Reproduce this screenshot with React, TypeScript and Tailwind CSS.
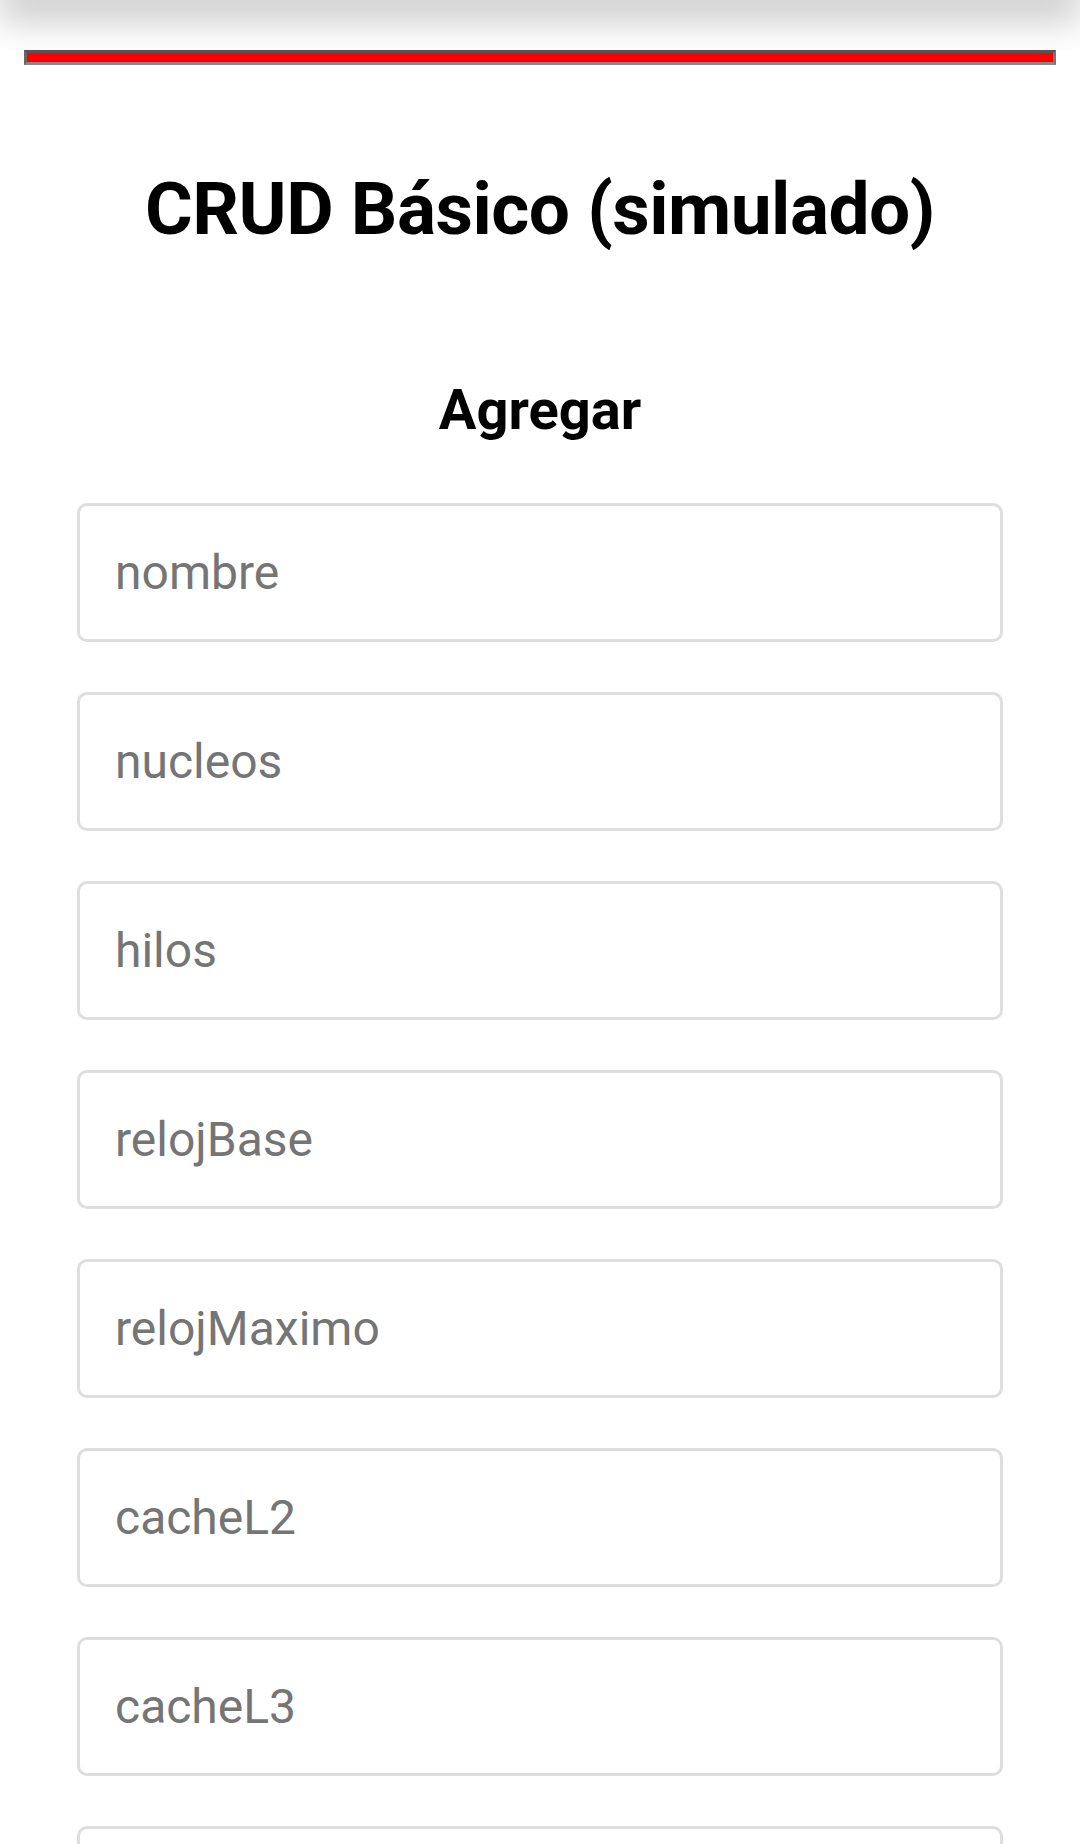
import { useState } from "react";

const FIELDS = ["nombre", "nucleos", "hilos", "relojBase", "relojMaximo", "cacheL2", "cacheL3", "tdp"];

export default function App() {
  const [values, setValues] = useState<Record<string, string>>({});

  return (
    <div className="min-h-[1844px] bg-white font-['Roboto','Liberation_Sans',sans-serif] text-black">
      {/* top shadow strip */}
      <div className="relative h-[50px] overflow-hidden">
        <div className="mx-[20px] h-0 shadow-[0_0_36px_22px_rgba(0,0,0,0.2)]" />
      </div>

      <div className="px-[24px]">
        <div className="h-[15px] border-[3px] border-t-[#5a5252] border-b-[#8c8686] border-l-[#6a6464] border-r-[#7a7474] bg-[#ff0000]" />

        <h1 className="mt-[104px] text-center text-[73px] font-bold leading-[80px] tracking-[-0.5px]">
          CRUD Básico (simulado)
        </h1>

        <h2 className="mt-[129px] text-center text-[56px] font-bold leading-[64px]">Agregar</h2>

        <div className="mt-[61px] flex flex-col gap-[50px] px-[53px]">
          {FIELDS.map(f => (
            <input
              key={f}
              placeholder={f}
              value={values[f] ?? ""}
              onChange={e => setValues({ ...values, [f]: e.target.value })}
              className="h-[139px] w-full rounded-[10px] border-[3px] border-[#dedede] bg-white px-[35px] text-[48px] text-black outline-none placeholder:text-[#757575]"
            />
          ))}
        </div>
      </div>
    </div>
  );
}
